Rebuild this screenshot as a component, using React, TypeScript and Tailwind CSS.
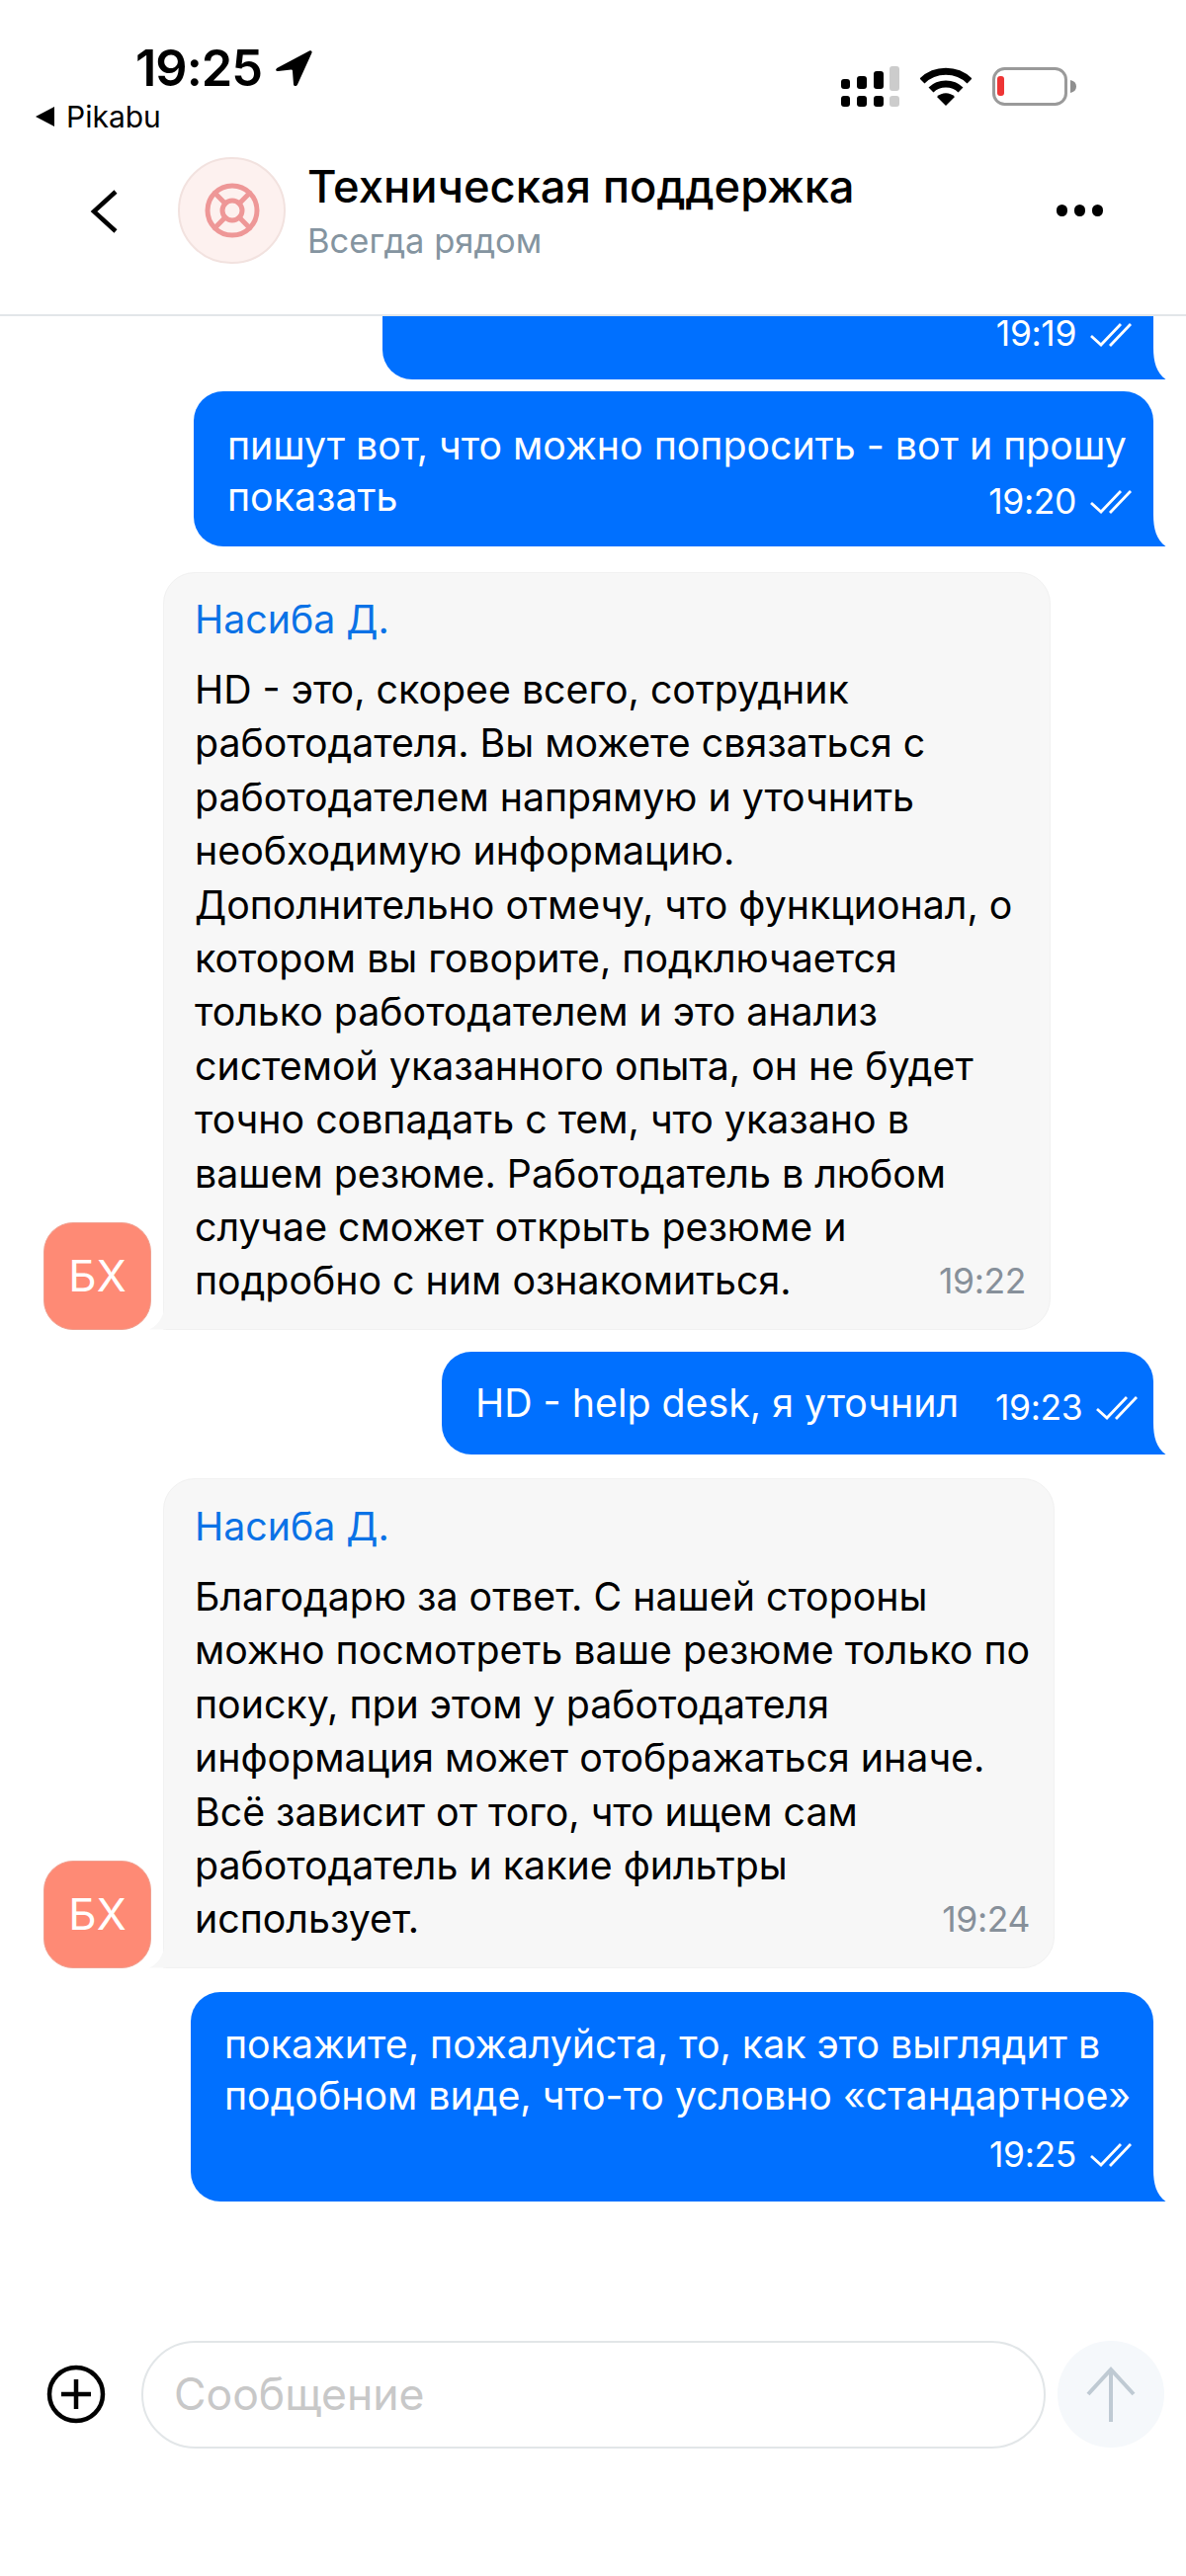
import React from 'react';
import { LifeBuoy } from 'lucide-react';

const font = { fontFamily: 'Inter, "Liberation Sans", sans-serif' };

const Ticks = ({ color = '#ffffff' }: { color?: string }) => (
  <svg width="42" height="24" viewBox="0 0 42 24" fill="none" stroke={color} strokeWidth="2.8">
    <path d="M1 13L11 22L31 1" />
    <path d="M20 23L41 1" />
  </svg>
);

const Tail = () => (
  <svg className="absolute right-[-13px] bottom-0" width="14" height="32" viewBox="0 0 14 32">
    <path d="M0 0H1C1 14 4 25 13.5 32H0Z" fill="#0070ff" />
  </svg>
);

const GreyTail = () => (
  <svg className="absolute left-[-15px] bottom-[-1px]" width="17" height="30" viewBox="0 0 17 30">
    <path d="M16 0C16 12 12 24 0 29.5H17V0Z" fill="#f7f7f7" />
  </svg>
);

const Time = ({ value, className }: { value: string; className: string }) => (
  <span className={`text-[35.5px] leading-[54px] tracking-[-0.4px] ${className}`}>{value}</span>
);

const Outgoing = ({ lines, time, ownRow, className }: { lines: string[]; time: string; ownRow?: boolean; className: string }) => {
  const last = lines[lines.length - 1];
  const head = ownRow ? lines : lines.slice(0, -1);
  return (
    <div className={`relative self-end mr-[33px] bg-[#0070ff] text-white rounded-[30px] rounded-br-none pl-[34px] pr-[22px] ${className}`}>
      {head.map((l) => (
        <div key={l} className="text-[39.3px] leading-[52px] whitespace-nowrap">{l}</div>
      ))}
      <div className={`flex items-start gap-[15px] ${ownRow ? 'justify-end' : 'justify-between'}`}>
        {!ownRow && <span className="text-[39.3px] leading-[52px] whitespace-nowrap mr-[22px]">{last}</span>}
        <div className={`flex items-center gap-[14px] ${ownRow ? 'mt-[7px]' : 'mt-[4px]'}`}>
          <Time value={time} className="text-white" />
          <Ticks />
        </div>
      </div>
      <Tail />
    </div>
  );
};

const Incoming = ({ lines, time, width, className }: { lines: string[]; time: string; width: string; className: string }) => (
  <div className={`flex items-end gap-[12px] ml-[44px] ${className}`}>
    <div className="w-[109px] h-[109px] shrink-0 rounded-[30px] bg-[#fe8a75] border border-[#f0a090] text-white flex items-center justify-center text-[44px]">
      БХ
    </div>
    <div className={`relative bg-[#f7f7f7] border border-[#f1f1f1] rounded-[32px] rounded-bl-none pl-[31px] pr-[24px] pb-[21px] ${width}`}>
      <div className="text-[39.3px] leading-[54px] text-[#0a72e6] mb-[17px]">Насиба Д.</div>
      {lines.slice(0, -1).map((l) => (
        <div key={l} className="text-[39.3px] leading-[54.4px] text-black whitespace-nowrap">{l}</div>
      ))}
      <div className="flex items-center justify-between">
        <span className="text-[39.3px] leading-[54.4px] text-black whitespace-nowrap">{lines[lines.length - 1]}</span>
        <Time value={time} className="text-[#87909a]" />
      </div>
      <GreyTail />
    </div>
  </div>
);

const StatusIcons = () => (
  <div className="flex items-start gap-[21px] mt-[67px] mr-[110px]">
    <svg width="59" height="41" viewBox="0 0 59 41">
      <g fill="#000000">
        <rect x="0" y="13" width="9" height="10" rx="3" />
        <rect x="16" y="10" width="10" height="13" rx="3" />
        <rect x="33" y="5" width="10" height="18" rx="3" />
        <rect x="0" y="30" width="9" height="11" rx="3" />
        <rect x="16" y="30" width="10" height="11" rx="3" />
        <rect x="33" y="30" width="10" height="11" rx="3" />
      </g>
      <g fill="#cccccc">
        <rect x="49" y="0" width="10" height="25" rx="3" />
        <rect x="49" y="30" width="10" height="11" rx="3" />
      </g>
    </svg>
    <svg width="52" height="40" viewBox="0 0 52 40" fill="none" className="mt-[1px]">
      <path d="M2 14C15 1 37 1 50 14" stroke="#000" strokeWidth="7" />
      <path d="M11 23C19 15 33 15 41 23" stroke="#000" strokeWidth="7" />
      <path d="M17 30C22 25 30 25 35 30L26 39Z" fill="#000" />
    </svg>
    <svg width="86" height="40" viewBox="0 0 86 40" fill="none" className="mt-[1px]">
      <rect x="1.5" y="1.5" width="73" height="36" rx="11" stroke="#9a9a9a" strokeWidth="3" />
      <rect x="5" y="9" width="7" height="20" rx="3" fill="#ee3535" />
      <path d="M79 13C83 14 85 16 85 19.5C85 23 83 25 79 26Z" fill="#8f8f8f" />
    </svg>
  </div>
);

export default function App() {
  return (
    <div style={font} className="w-[1200px] h-[2607px] bg-white flex flex-col overflow-hidden">
      <header className="h-[320px] shrink-0 border-b-2 border-[#e2e6e9] flex flex-col">
        <div className="h-[159px] flex justify-between shrink-0">
          <div className="flex flex-col">
            <div className="flex items-center gap-[13px] ml-[137px] mt-[42px] h-[54px]">
              <span className="text-[50.5px] leading-[54px] font-semibold text-black tracking-[-1px]">19:25</span>
              <svg width="38" height="38" viewBox="0 0 38 38">
                <path d="M3 18.5L35 1.5C37 .5 38 2 37.5 3.5L23 35.5C22 37.5 19.5 37.5 19 35.5L18 22C18 21 17.5 20.5 16.5 20.5L3.5 22C.5 22 .5 20 3 18.5Z" fill="#000" />
              </svg>
            </div>
            <div className="flex items-center gap-[12px] ml-[35px] mt-[5px] h-[34px]">
              <svg width="20" height="22" viewBox="0 0 20 22"><path d="M20 1V21L1 11Z" fill="#000" /></svg>
              <span className="text-[30px] leading-[34px] text-black">Pikabu</span>
            </div>
          </div>
          <StatusIcons />
        </div>
        <div className="flex items-start">
          <svg className="ml-[91px] mt-[33px]" width="29" height="44" viewBox="0 0 29 44" fill="none" stroke="#000" strokeWidth="4.5">
            <path d="M26 2L4 22L26 42" />
          </svg>
          <div className="w-[109px] h-[108px] ml-[60px] rounded-full bg-[#fdf1ef] border-2 border-[#f2e2df] flex items-center justify-center">
            <LifeBuoy size={60} color="#ee9797" strokeWidth={2} />
          </div>
          <div className="ml-[22px]">
            <div className="text-[45.3px] leading-[54px] mt-[3px] font-medium text-black">Техническая поддержка</div>
            <div className="text-[34.5px] leading-[46px] mt-[5px] text-[#8494a0]">Всегда рядом</div>
          </div>
          <div className="ml-auto mr-[84px] mt-[48px] flex gap-[7px]">
            <span className="w-[11px] h-[12px] rounded-full bg-black" />
            <span className="w-[11px] h-[12px] rounded-full bg-black" />
            <span className="w-[11px] h-[12px] rounded-full bg-black" />
          </div>
        </div>
      </header>

      <main className="flex flex-col shrink-0">
        <div className="relative self-end mr-[33px] w-[780px] h-[64px] bg-[#0070ff] rounded-b-[30px] rounded-br-none flex items-start justify-end gap-[14px] pr-[22px]">
          <span className="text-[35.5px] leading-[34px] mt-[1px] tracking-[-0.4px] text-white">19:19</span>
          <div className="mt-[7px]"><Ticks /></div>
          <Tail />
        </div>
        <Outgoing
          className="mt-[12px] pt-[29px] pb-[18px] w-[971px]"
          lines={['пишут вот, что можно попросить - вот и прошу', 'показать']}
          time="19:20"
        />
        <Incoming
          className="mt-[26px] [&>div:last-child]:pt-[20px]"
          width="w-[898px]"
          time="19:22"
          lines={[
            'HD - это, скорее всего, сотрудник',
            'работодателя. Вы можете связаться с',
            'работодателем напрямую и уточнить',
            'необходимую информацию.',
            'Дополнительно отмечу, что функционал, о',
            'котором вы говорите, подключается',
            'только работодателем и это анализ',
            'системой указанного опыта, он не будет',
            'точно совпадать с тем, что указано в',
            'вашем резюме. Работодатель в любом',
            'случае сможет открыть резюме и',
            'подробно с ним ознакомиться.',
          ]}
        />
        <Outgoing className="mt-[22px] pt-[26px] pb-[20px] w-[720px]" lines={['HD - help desk, я уточнил']} time="19:23" />
        <Incoming
          className="mt-[24px] [&>div:last-child]:pt-[21px]"
          width="w-[902px]"
          time="19:24"
          lines={[
            'Благодарю за ответ. С нашей стороны',
            'можно посмотреть ваше резюме только по',
            'поиску, при этом у работодателя',
            'информация может отображаться иначе.',
            'Всё зависит от того, что ищем сам',
            'работодатель и какие фильтры',
            'использует.',
          ]}
        />
        <Outgoing
          className="mt-[24px] pt-[27px] pb-[20px] w-[974px]"
          ownRow
          lines={['покажите, пожалуйста, то, как это выглядит в', 'подобном виде, что-то условно «стандартное»']}
          time="19:25"
        />
      </main>

      <footer className="flex items-center mt-[141px] pl-[47px] pr-[22px]">
        <svg width="60" height="60" viewBox="0 0 60 60" fill="none" stroke="#000" strokeWidth="4.5" className="shrink-0">
          <circle cx="30" cy="30" r="27" />
          <path d="M30 15V45M15 30H45" />
        </svg>
        <div className="w-[915px] h-[109px] ml-[36px] rounded-full border-2 border-[#e2e6e8] flex items-center pl-[31px] text-[44.5px] text-[#c8c8c8]">
          Сообщение
        </div>
        <div className="w-[108px] h-[108px] ml-[12px] rounded-full bg-[#f5f8fb] flex items-center justify-center">
          <svg width="50" height="56" viewBox="0 0 50 56" fill="none" stroke="#bfcad3" strokeWidth="4">
            <path d="M25 2V56M2 28L25 3L48 28" />
          </svg>
        </div>
      </footer>
    </div>
  );
}
